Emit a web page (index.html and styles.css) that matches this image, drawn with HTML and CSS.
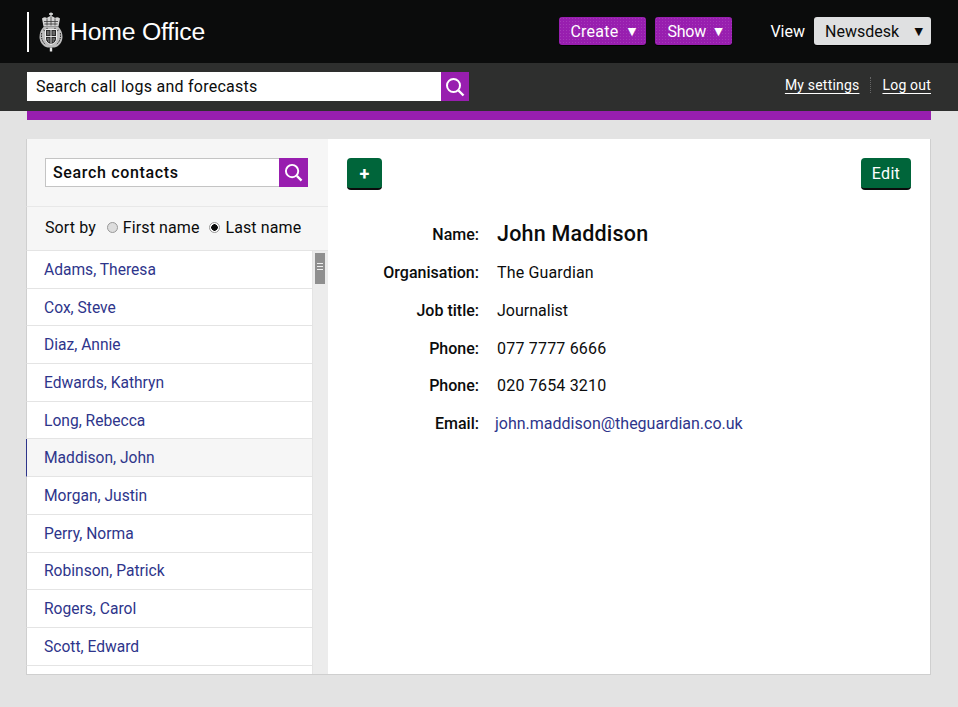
FILE: index.html
```html
<!DOCTYPE html>
<html lang="en">

<head>
  <meta charset="UTF-8">
  <meta name="viewport" content="width=device-width, initial-scale=1.0">
  <title>Home Office - Contacts</title>
  <link rel="stylesheet" href="styles.css">
</head>

<body>
  <header class="top-bar">
    <div class="brand">
      <svg class="crest" width="24" height="40" viewBox="0 0 24 40" aria-hidden="true">
        <path d="M12 0.500v4M10 2h4" stroke="#e6e6e6" stroke-width="1.300" fill="none" />
        <path d="M3 6.500c2-1.500 3.500-1.500 5-.5 1-1.200 2.500-1.800 4-1.800s3 .6 4 1.800c1.500-1 3-1 5 .5l-1.500 8h-15z" fill="#d4d4d4" />
        <path d="M5 9.500h14M5.500 12h13M8 6.500v7M12 5v8.500M16 6.500v7" stroke="#3a3a3a" stroke-width="0.800" fill="none" />
        <path d="M5 14.500h14c3 2.500 4.500 6.500 4.500 10.500 0 5-3.500 9.500-8 10.500h-7c-4.500-1-8-5.500-8-10.500 0-4 1.500-8 4.500-10.500z" fill="#bdbdbd" />
        <path d="M2.700 21c-.9 4 .3 8.500 3.800 11.500M21.300 21c.9 4-.3 8.500-3.800 11.500M4.500 18l1.500 1M19.500 18l-1.500 1M8 15.800v1.500M16 15.800v1.500" stroke="#2a2a2a" stroke-width="1" fill="none" stroke-dasharray="1.500 1" />
        <path d="M6.500 17.500h11v9.500c0 2.800-2.700 4.500-5.500 5.700-2.800-1.200-5.500-2.900-5.500-5.700z" fill="#2b2b2b" stroke="#efefef" stroke-width="1" />
        <path d="M12 17.500v15M6.500 24.500h11" stroke="#e0e0e0" stroke-width="1" />
        <path d="M8 20h2.500M13.500 20h2.500M8 22h2.500M13.500 22h2.500M8 27h2.500M13.500 27h2.500M13.500 29h1.500M9 29h1.500" stroke="#a0a0a0" stroke-width="1" />
        <path d="M12 35.500v4" stroke="#e6e6e6" stroke-width="2.400" />
      </svg>
      <span class="brand-name">Home Office</span>
    </div>
    <div class="top-actions">
      <a class="menu-btn create" href="#">Create <span class="arrow">&#9660;</span></a>
      <a class="menu-btn show" href="#">Show <span class="arrow">&#9660;</span></a>
      <span class="view-label">View</span>
      <a class="view-select" href="#">Newsdesk <span class="arrow">&#9660;</span></a>
    </div>
  </header>

  <div class="sub-bar">
    <form class="global-search">
      <span class="global-search-text">Search call logs and forecasts</span>
      <span class="search-btn">
        <svg width="20" height="20" viewBox="0 0 20 20" aria-hidden="true">
          <circle cx="8.500" cy="8.500" r="6.500" fill="none" stroke="#fff" stroke-width="2" />
          <path d="M13.500 13.500l5 5" stroke="#fff" stroke-width="2.400" />
        </svg>
      </span>
    </form>
    <nav class="user-links">
      <a href="#">My settings</a>
      <a href="#">Log out</a>
    </nav>
  </div>

  <div class="accent-strip"></div>

  <main class="panel">
    <aside class="contacts">
      <div class="contact-search-wrap">
        <form class="contact-search">
          <span class="contact-search-text">Search contacts</span>
          <span class="search-btn small">
            <svg width="19" height="19" viewBox="0 0 20 20" aria-hidden="true">
              <circle cx="8.500" cy="8.500" r="6.500" fill="none" stroke="#fff" stroke-width="2" />
              <path d="M13.500 13.500l5 5" stroke="#fff" stroke-width="2.400" />
            </svg>
          </span>
        </form>
      </div>
      <div class="sort-row">
        <span class="sort-label">Sort by</span>
        <span class="radio"></span><span class="radio-label">First name</span>
        <span class="radio checked"></span><span>Last name</span>
      </div>
      <div class="list-wrap">
        <ul class="contact-list">
          <li><a href="#">Adams, Theresa</a></li>
          <li><a href="#">Cox, Steve</a></li>
          <li><a href="#">Diaz, Annie</a></li>
          <li><a href="#">Edwards, Kathryn</a></li>
          <li><a href="#">Long, Rebecca</a></li>
          <li class="active"><a href="#">Maddison, John</a></li>
          <li><a href="#">Morgan, Justin</a></li>
          <li><a href="#">Perry, Norma</a></li>
          <li><a href="#">Robinson, Patrick</a></li>
          <li><a href="#">Rogers, Carol</a></li>
          <li><a href="#">Scott, Edward</a></li>
          <li></li>
        </ul>
        <div class="scroll-track">
          <div class="scroll-thumb"><i></i><i></i><i></i></div>
        </div>
      </div>
    </aside>

    <section class="detail">
      <div class="detail-actions">
        <a class="green-btn plus" href="#">+</a>
        <a class="green-btn edit" href="#">Edit</a>
      </div>
      <dl class="fields">
        <dt class="name-label">Name:</dt>
        <dd class="name-value">John Maddison</dd>
        <dt>Organisation:</dt>
        <dd class="organisation">The Guardian</dd>
        <dt>Job title:</dt>
        <dd>Journalist</dd>
        <dt>Phone:</dt>
        <dd class="phone">077 7777 6666</dd>
        <dt>Phone:</dt>
        <dd class="phone">020 7654 3210</dd>
        <dt>Email:</dt>
        <dd class="email"><a href="#">john.maddison@theguardian.co.uk</a></dd>
      </dl>
    </section>
  </main>
</body>

</html>
```

FILE: styles.css
```css
body {
  margin: 0;
  height: 707px;
  overflow: hidden;
  background-color: #e3e3e3;
  color: #0b0c0c;
  font-family: Roboto, "Open Sans", sans-serif;
  font-size: 16px;
}

a {
  text-decoration: none;
}

/* top bar */
.top-bar {
  height: 63px;
  box-sizing: border-box;
  padding: 0 27px;
  background-color: #0b0c0c;
  display: flex;
  justify-content: space-between;
  align-items: center;
}

.brand {
  height: 40px;
  margin-top: 1px;
  padding-left: 10px;
  border-left: 2px solid #fff;
  display: flex;
  align-items: center;
  gap: 7px;
}

.brand-name {
  color: #fff;
  font-family: "Liberation Sans", Arial, sans-serif;
  font-size: 24.800px;
  letter-spacing: -0.2px;
}

.top-actions {
  display: flex;
  align-items: center;
  margin-top: -1px;
}

.menu-btn {
  height: 28px;
  box-sizing: border-box;
  padding: 0 10px 0 11px;
  margin-right: 9px;
  border-radius: 3px;
  background-color: #981eaf;
  background-image: radial-gradient(circle, rgba(255, 255, 255, 0.12) 0.5px, transparent 1px);
  background-size: 3px 3px;
  box-shadow: 0 1px 0 #000;
  color: #fff;
  display: flex;
  align-items: center;
  justify-content: space-between;
}

.menu-btn.create {
  width: 87px;
  letter-spacing: 0.25px;
}

.menu-btn.show {
  width: 77px;
  padding-left: 12px;
  letter-spacing: -0.2px;
}

.arrow {
  font-family: "DejaVu Sans", sans-serif;
  font-size: 11px;
}

.view-label {
  margin-left: 29px;
  margin-right: 9px;
  color: #fff;
}

.view-select {
  height: 28px;
  box-sizing: border-box;
  width: 117px;
  padding: 0 8px 0 11px;
  border-radius: 3px;
  background-color: #dfe0e1;
  box-shadow: 0 1px 0 #000;
  color: #0b0c0c;
  display: flex;
  align-items: center;
  justify-content: space-between;
}

/* search bar */
.sub-bar {
  height: 48px;
  box-sizing: border-box;
  padding: 9px 27px 0;
  background-color: #2e2f2e;
  display: flex;
  justify-content: space-between;
}

.global-search {
  width: 442px;
  height: 29px;
  background-color: #fff;
  display: flex;
  justify-content: space-between;
  align-items: center;
}

.global-search-text {
  padding-left: 9px;
  letter-spacing: 0.25px;
}

.search-btn {
  width: 28px;
  height: 29px;
  background-color: #981eaf;
  display: flex;
  align-items: center;
  justify-content: center;
}

.user-links {
  display: flex;
  align-items: flex-start;
  margin-top: 5px;
  font-size: 14px;
  letter-spacing: 0.2px;
}

.user-links a {
  color: #fff;
  text-decoration: underline;
  text-underline-offset: 3px;
}

.user-links a + a {
  margin-left: 11px;
  padding-left: 11px;
  border-left: 1px dotted #666;
}

.accent-strip {
  height: 9px;
  margin: 0 27px;
  background-color: #981eaf;
}

/* main panel */
.panel {
  height: 536px;
  box-sizing: border-box;
  margin: 19px 27px 0 26px;
  border: 1px solid #cfcfcf;
  border-width: 0 1px 1px 0;
  background-color: #fff;
  display: flex;
}

.contacts {
  width: 302px;
  flex-shrink: 0;
  display: flex;
  flex-direction: column;
  background-color: #f6f6f6;
}

.contact-search-wrap {
  height: 68px;
  box-sizing: border-box;
  padding: 19px 20px 0 18px;
  border-left: 1px solid #cfcfcf;
  border-bottom: 1px solid #e8e8e8;
}

.contact-search {
  height: 29px;
  box-sizing: border-box;
  border: 1px solid #c4c4c4;
  border-right: 0;
  background-color: #fff;
  display: flex;
  justify-content: space-between;
  align-items: center;
}

.contact-search-text {
  padding-left: 7px;
  font-weight: 500;
  letter-spacing: 0.65px;
}

.search-btn.small {
  height: 29px;
  margin-top: -1px;
  margin-bottom: -1px;
  width: 29px;
}

.sort-row {
  height: 44px;
  box-sizing: border-box;
  padding: 0 0 2px 18px;
  border-left: 1px solid #cfcfcf;
  border-bottom: 1px solid #e4e4e4;
  letter-spacing: 0.1px;
  display: flex;
  align-items: center;
}

.sort-label {
  margin-right: 11px;
}

.radio {
  width: 9px;
  height: 9px;
  margin-right: 5px;
  border: 1px solid #999;
  border-radius: 50%;
  background-color: #ddd;
}

.radio-label {
  margin-right: 10px;
}

.radio.checked {
  background-color: #fff;
  background-image: radial-gradient(circle, #0b0c0c 0, #0b0c0c 3px, transparent 3.500px);
}

.list-wrap {
  flex: 1;
  min-height: 0;
  display: flex;
  background-color: #fff;
}

.contact-list {
  flex: 1;
  margin: 0;
  padding: 0;
  list-style: none;
  overflow: hidden;
  border-right: 1px solid #e4e4e4;
}

.contact-list li {
  height: 37.700px;
  box-sizing: border-box;
  padding: 1px 0 0 17px;
  border-left: 1px solid #cfcfcf;
  border-bottom: 1px solid #e4e4e4;
  font-size: 15.600px;
  display: flex;
  align-items: center;
}

.contact-list li.active {
  border-left-color: #2e358b;
  background-color: #f6f6f6;
}

.contact-list a {
  color: #2e358b;
}

.scroll-track {
  width: 15px;
  flex-shrink: 0;
  padding: 2px 3px 0 2px;
  box-sizing: border-box;
  background-color: #ececec;
}

.scroll-thumb {
  height: 31px;
  padding-top: 10px;
  box-sizing: border-box;
  background-color: #8f8f8f;
}

.scroll-thumb i {
  display: block;
  height: 1px;
  margin: 0 2px 2px;
  background-color: #eee;
}

/* contact detail */
.detail {
  flex: 1;
  padding: 19px 19px 0;
}

.detail-actions {
  display: flex;
  justify-content: space-between;
}

.green-btn {
  height: 32px;
  box-sizing: border-box;
  border-radius: 4px;
  border-bottom: 2px solid #0b0c0c;
  background-color: #00653a;
  color: #fff;
  display: flex;
  align-items: center;
  justify-content: center;
}

.green-btn.plus {
  width: 35px;
  font-weight: 700;
  font-size: 18px;
}

.green-btn.edit {
  width: 50px;
  letter-spacing: 0.3px;
}

.fields {
  margin: 23px 0 0;
  display: grid;
  grid-template-columns: 132px 1fr;
  column-gap: 18px;
  row-gap: 0;
}

.fields dt,
.fields dd {
  margin: 0;
  height: 37.700px;
  display: flex;
  align-items: center;
}

.fields dt {
  justify-content: flex-end;
  font-weight: 500;
}

.fields .name-label {
  height: 41px;
  padding-top: 1px;
  box-sizing: border-box;
}

.fields .name-value {
  height: 41px;
  font-size: 21.500px;
  font-weight: 500;
  letter-spacing: 0.2px;
}

.fields .organisation {
  letter-spacing: 0.15px;
}

.fields .phone {
  letter-spacing: 0.2px;
}

.fields .email {
  margin-left: -2px;
}

.email a {
  color: #2e358b;
}
```
